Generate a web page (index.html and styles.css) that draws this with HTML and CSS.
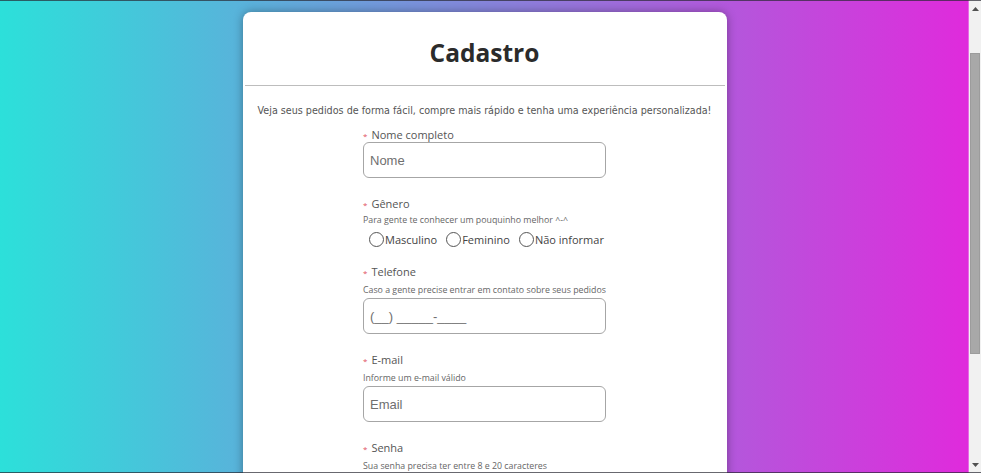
FILE: index.html
```html
<!DOCTYPE html>
<html lang="pt-BR">
<head>
<meta charset="utf-8">
<title>Cadastro</title>
<link rel="stylesheet" href="styles.css">
</head>
<body>
<div class="frame-top"></div>
<div class="frame-bottom"></div>
<div class="scrollbar" aria-hidden="true">
  <div class="sb-btn">
    <svg width="7" height="4" viewBox="0 0 7 4"><path d="M0 4 L3.5 0 L7 4 Z" fill="#505050"/></svg>
  </div>
  <div class="sb-track"><div class="sb-thumb"></div></div>
  <div class="sb-btn">
    <svg width="7" height="4" viewBox="0 0 7 4"><path d="M0 0 L3.5 4 L7 0 Z" fill="#505050"/></svg>
  </div>
</div>
<main class="page">
  <section class="card">
    <h1 class="title">Cadastro</h1>
    <hr class="divider">
    <p class="intro">Veja seus pedidos de forma fácil, compre mais rápido e tenha uma experiência personalizada!</p>
    <form class="form">
      <div class="field">
        <label class="label"><span class="req">*</span>Nome completo</label>
        <input class="input" type="text" placeholder="Nome">
      </div>
      <div class="field field-radio">
        <label class="label"><span class="req">*</span>Gênero</label>
        <span class="hint hint-tight">Para gente te conhecer um pouquinho melhor ^-^</span>
        <div class="radios">
          <label class="radio"><input type="radio" name="g"><span>Masculino</span></label>
          <label class="radio"><input type="radio" name="g"><span>Feminino</span></label>
          <label class="radio"><input type="radio" name="g"><span>Não informar</span></label>
        </div>
      </div>
      <div class="field">
        <label class="label"><span class="req">*</span>Telefone</label>
        <span class="hint">Caso a gente precise entrar em contato sobre seus pedidos</span>
        <input class="input" type="text" placeholder="(__) _____-____">
      </div>
      <div class="field">
        <label class="label"><span class="req">*</span>E-mail</label>
        <span class="hint">Informe um e-mail válido</span>
        <input class="input" type="email" placeholder="Email">
      </div>
      <div class="field">
        <label class="label"><span class="req">*</span>Senha</label>
        <span class="hint">Sua senha precisa ter entre 8 e 20 caracteres</span>
        <input class="input" type="password" placeholder="Senha">
      </div>
      <button class="submit" type="button">Cadastrar</button>
    </form>
  </section>
</main>
<script src="script.js"></script>
</body>
</html>
```
FILE: styles.css
```css
html {
  background: linear-gradient(to right, #2ce0da 0%, #e228dc 100%);
  min-height: 100%;
}
body {
  margin: 0;
  font-family: "Open Sans", "Noto Sans", sans-serif;
}
.frame-top, .frame-bottom {
  position: fixed;
  left: 0;
  right: 0;
  height: 1px;
  background: rgba(40, 40, 50, 0.7);
  z-index: 5;
}
.frame-top { top: 0; }
.frame-bottom { bottom: 0; }
.scrollbar {
  position: fixed;
  top: 0;
  right: 0;
  bottom: 0;
  width: 12px;
  background: #f1f1f1;
  border-left: 1px solid #e86ae6;
  display: flex;
  flex-direction: column;
  z-index: 4;
}
.sb-btn {
  height: 17px;
  display: flex;
  align-items: center;
  justify-content: center;
}
.sb-track {
  flex: 1;
  padding: 36px 1px 0 1px;
}
.sb-thumb {
  height: 301px;
  background: #a8a8a8;
  border: 1px solid #9c9c9c;
  box-sizing: border-box;
}
.page {
  box-sizing: border-box;
  height: 690px;
  padding: 69px 12px 0 0;
}
.card {
  width: 484px;
  margin: 0 auto;
  background: #fff;
  border-radius: 8px;
  box-shadow: 0 0 10px rgba(0, 0, 0, 0.35);
  padding: 25px 0 22px;
}
.title {
  margin: 0;
  text-align: center;
  font-family: "Open Sans", sans-serif;
  font-weight: 700;
  font-size: 24.5px;
  line-height: 32px;
  color: #2b2b2b;
}
.divider {
  border: 0;
  border-top: 1px solid #bdbdbd;
  margin: 16px 2px 0;
}
.intro {
  margin: 18px 0 10px;
  text-align: center;
  font-family: "DejaVu Sans", sans-serif;
  font-size: 9.6px;
  line-height: 14px;
  color: #555;
}
.form {
  width: 243px;
  margin: 0 auto;
  display: flex;
  flex-direction: column;
}
.field {
  display: flex;
  flex-direction: column;
  margin-bottom: 19px;
}
.field-radio { margin-bottom: 17px; }
.label {
  font-size: 11px;
  line-height: 14px;
  color: #555;
  display: flex;
  align-items: baseline;
}
.req {
  color: #e0505e;
  font-size: 8px;
  margin: 0 4px 0 0;
}
.hint {
  margin-top: 4px;
  font-size: 8.8px;
  line-height: 12px;
  color: #666;
  white-space: nowrap;
}
.hint-tight { margin-top: 2px; }
.input {
  box-sizing: border-box;
  margin: 2px 0 0;
  width: 243px;
  height: 36px;
  border: 1px solid #a6a6a6;
  border-radius: 6px;
  padding: 0 6px;
  font-family: "Liberation Sans", Arial, sans-serif;
  font-size: 13px;
  color: #333;
  background: #fff;
}
.field > .label + .input { margin-top: -1px; }
.input::placeholder { color: #6f6f6f; }
.radios {
  display: flex;
  gap: 9px;
  margin: 4px 0 0 6px;
  height: 18px;
  align-items: center;
}
.radio {
  display: flex;
  align-items: center;
  font-size: 11px;
  color: #444;
  white-space: nowrap;
}
.radio input {
  appearance: none;
  -webkit-appearance: none;
  width: 15px;
  height: 15px;
  margin: 0 1px 0 0;
  border: 1px solid #555;
  border-radius: 50%;
  background: #fff;
}
.submit {
  margin-top: 6px;
  height: 36px;
  border: 0;
  border-radius: 6px;
  background: #8a5bd8;
  color: #fff;
  font-family: "Open Sans", sans-serif;
  font-size: 13px;
  font-weight: 600;
}
```
FILE: script.js
```js
window.scrollTo(0, 57);
```
